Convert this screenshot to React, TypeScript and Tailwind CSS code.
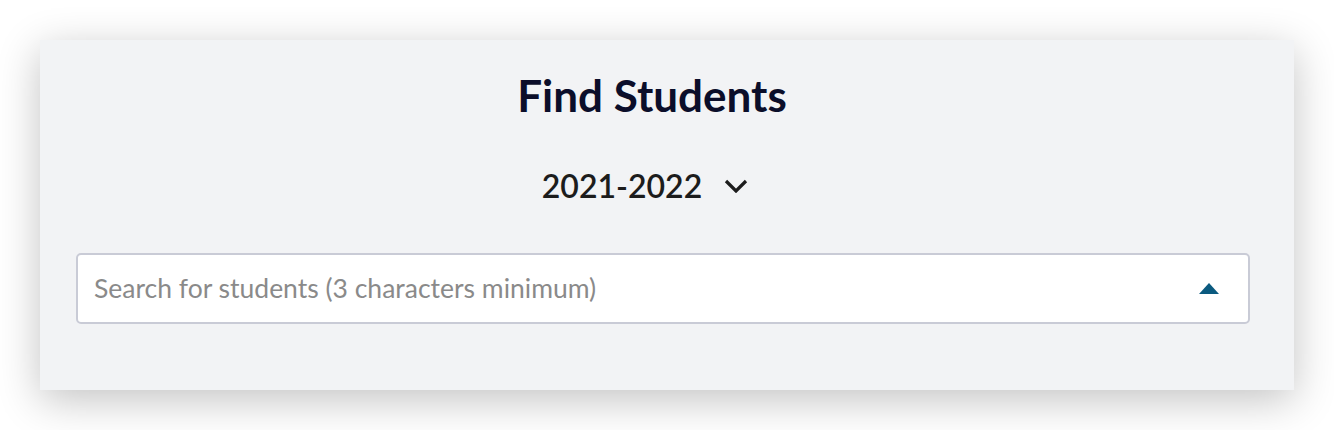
export default function App() {
  return (
    <div className="min-h-[430px] bg-white p-[40px] font-['Lato','Liberation_Sans',sans-serif]">
      <div className="flex h-[350px] flex-col items-center bg-[#f2f3f5] pr-[44px] pl-[36px] shadow-[0_10px_40px_rgba(0,0,0,0.24)]">
        <h1 className="mt-[29px] mr-[22px] text-[44px] leading-[52px] font-bold text-[#0b0e2a]">Find Students</h1>
        <button className="mt-[46px] mr-[36px] flex items-center gap-[22px] text-[32px] leading-[38px] font-semibold text-[#1c1c1c]">
          <span>2021-2022</span>
          <svg width="24" height="14" viewBox="0 0 24 14" fill="none">
            <path d="M2 2l10 10L22 2" stroke="#1c1c1c" strokeWidth="3.2" />
          </svg>
        </button>
        <div className="mt-[48px] flex h-[71px] w-full items-center rounded-[5px] border-2 border-[#c9cbd6] bg-white pr-[29px] pl-[16px]">
          <input
            className="flex-1 bg-transparent text-[26.5px] text-[#333] outline-none placeholder:text-[#8a8a8a]"
            placeholder="Search for students (3 characters minimum)"
          />
          <svg width="20" height="11" viewBox="0 0 20 11">
            <path d="M10 0L20 11H0z" fill="#0b5a7f" />
          </svg>
        </div>
      </div>
    </div>
  );
}
